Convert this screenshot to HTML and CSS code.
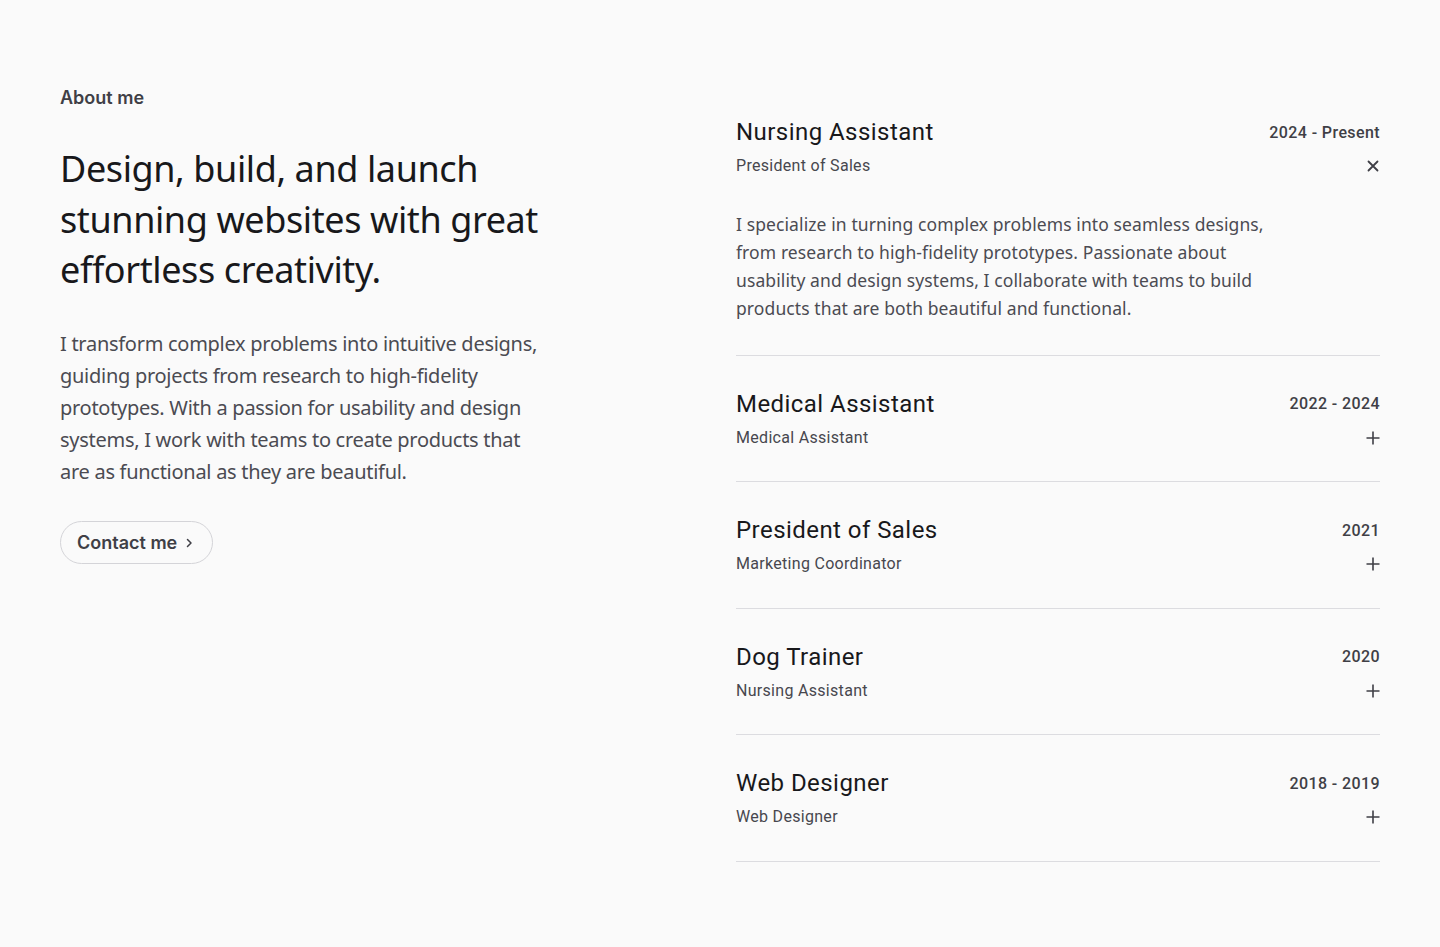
FILE: index.html
```html
<!DOCTYPE html>
<html lang="en">
<head>
  <meta charset="UTF-8">
  <title>About me</title>
  <link rel="stylesheet" href="styles.css">
</head>
<body>
  <main class="about">
    <section class="intro">
      <p class="eyebrow">About me</p>
      <h1 class="headline">Design, build, and launch stunning websites with great effortless creativity.</h1>
      <p class="lead">I transform complex problems into intuitive designs, guiding projects from research to high-fidelity prototypes. With a passion for usability and design systems, I work with teams to create products that are as functional as they are beautiful.</p>
      <a class="btn" href="#">Contact me
        <svg class="chev" width="12" height="12" viewBox="0 0 12 12" fill="none" stroke="currentColor" stroke-width="1.5" stroke-linecap="round" stroke-linejoin="round"><path d="M4.5 2.5 8 6l-3.5 3.5"/></svg>
      </a>
    </section>

    <section class="jobs">
      <div class="job open">
        <div class="job-head">
          <div class="job-row">
            <h3 class="job-title">Nursing Assistant</h3>
            <span class="job-date">2024 - Present</span>
          </div>
          <div class="job-row">
            <span class="job-sub">President of Sales</span>
            <svg class="toggle" width="14" height="14" viewBox="0 0 14 14" fill="none" stroke="currentColor" stroke-width="1.8" stroke-linecap="round"><path d="M2.5 2.5l9 9M11.5 2.5l-9 9"/></svg>
          </div>
        </div>
        <p class="job-body">I specialize in turning complex problems into seamless designs, from research to high-fidelity prototypes. Passionate about usability and design systems, I collaborate with teams to build products that are both beautiful and functional.</p>
      </div>

      <div class="job">
        <div class="job-head">
          <div class="job-row">
            <h3 class="job-title">Medical Assistant</h3>
            <span class="job-date">2022 - 2024</span>
          </div>
          <div class="job-row">
            <span class="job-sub">Medical Assistant</span>
            <svg class="toggle" width="14" height="14" viewBox="0 0 14 14" fill="none" stroke="currentColor" stroke-width="1.6"><path d="M7 0.5v13M0.5 7h13"/></svg>
          </div>
        </div>
      </div>

      <div class="job">
        <div class="job-head">
          <div class="job-row">
            <h3 class="job-title">President of Sales</h3>
            <span class="job-date">2021</span>
          </div>
          <div class="job-row">
            <span class="job-sub">Marketing Coordinator</span>
            <svg class="toggle" width="14" height="14" viewBox="0 0 14 14" fill="none" stroke="currentColor" stroke-width="1.6"><path d="M7 0.5v13M0.5 7h13"/></svg>
          </div>
        </div>
      </div>

      <div class="job">
        <div class="job-head">
          <div class="job-row">
            <h3 class="job-title">Dog Trainer</h3>
            <span class="job-date">2020</span>
          </div>
          <div class="job-row">
            <span class="job-sub">Nursing Assistant</span>
            <svg class="toggle" width="14" height="14" viewBox="0 0 14 14" fill="none" stroke="currentColor" stroke-width="1.6"><path d="M7 0.5v13M0.5 7h13"/></svg>
          </div>
        </div>
      </div>

      <div class="job">
        <div class="job-head">
          <div class="job-row">
            <h3 class="job-title">Web Designer</h3>
            <span class="job-date">2018 - 2019</span>
          </div>
          <div class="job-row">
            <span class="job-sub">Web Designer</span>
            <svg class="toggle" width="14" height="14" viewBox="0 0 14 14" fill="none" stroke="currentColor" stroke-width="1.6"><path d="M7 0.5v13M0.5 7h13"/></svg>
          </div>
        </div>
      </div>
    </section>
  </main>
</body>
</html>
```

FILE: styles.css
```css
* { box-sizing: border-box; }

body {
  margin: 0;
  background: #fafafa;
  color: #18181b;
  font-family: "Noto Sans", Arial, sans-serif;
}

.about {
  display: grid;
  grid-template-columns: 1fr 644px;
  gap: 32px;
  padding: 84px 60px 60px;
}

/* left column */
.intro { max-width: 490px; }

.eyebrow {
  margin: 0;
  font-family: Inter, sans-serif;
  font-size: 18px;
  line-height: 28px;
  font-weight: 600;
  color: #3f3f46;
}

.headline {
  margin: 32px 0 0;
  font-size: 36px;
  line-height: 50.5px;
  font-weight: 400;
  letter-spacing: -0.4px;
  color: #18181b;
}

.lead {
  margin: 32px 0 0;
  font-size: 20px;
  line-height: 32px;
  letter-spacing: -0.28px;
  color: #4b4b52;
}

.btn {
  display: inline-flex;
  align-items: center;
  gap: 6px;
  margin-top: 33px;
  height: 43px;
  padding: 0 17px 0 16px;
  border: 1px solid #d4d4d8;
  border-radius: 22px;
  font-family: Inter, sans-serif;
  font-size: 18px;
  font-weight: 600;
  color: #3f3f46;
  text-decoration: none;
}

.chev { margin-top: 1px; }

/* right column */
.job {
  padding: 32px 0 31.5px;
  border-bottom: 1px solid #dcdce0;
}

.job.open { padding-bottom: 32.5px; }

.job-head { display: flex; flex-direction: column; gap: 6px; }

.job-row {
  display: flex;
  justify-content: space-between;
  align-items: center;
}

.job-title {
  margin: 0;
  font-family: Roboto, sans-serif;
  font-size: 24px;
  line-height: 32px;
  font-weight: 400;
  letter-spacing: 0.45px;
  color: #18181b;
}

.job-date {
  font-family: Roboto, sans-serif;
  font-size: 16px;
  font-weight: 500;
  letter-spacing: 0.4px;
  color: #3f3f46;
}

.job-sub {
  font-family: Roboto, sans-serif;
  font-size: 16px;
  line-height: 24px;
  letter-spacing: 0.3px;
  color: #47474e;
}

.toggle { color: #3f3f46; flex: none; }

.job-body {
  margin: 32px 0 0;
  max-width: 545px;
  font-size: 17.5px;
  line-height: 28px;
  letter-spacing: 0.1px;
  color: #4b4b52;
}
```
